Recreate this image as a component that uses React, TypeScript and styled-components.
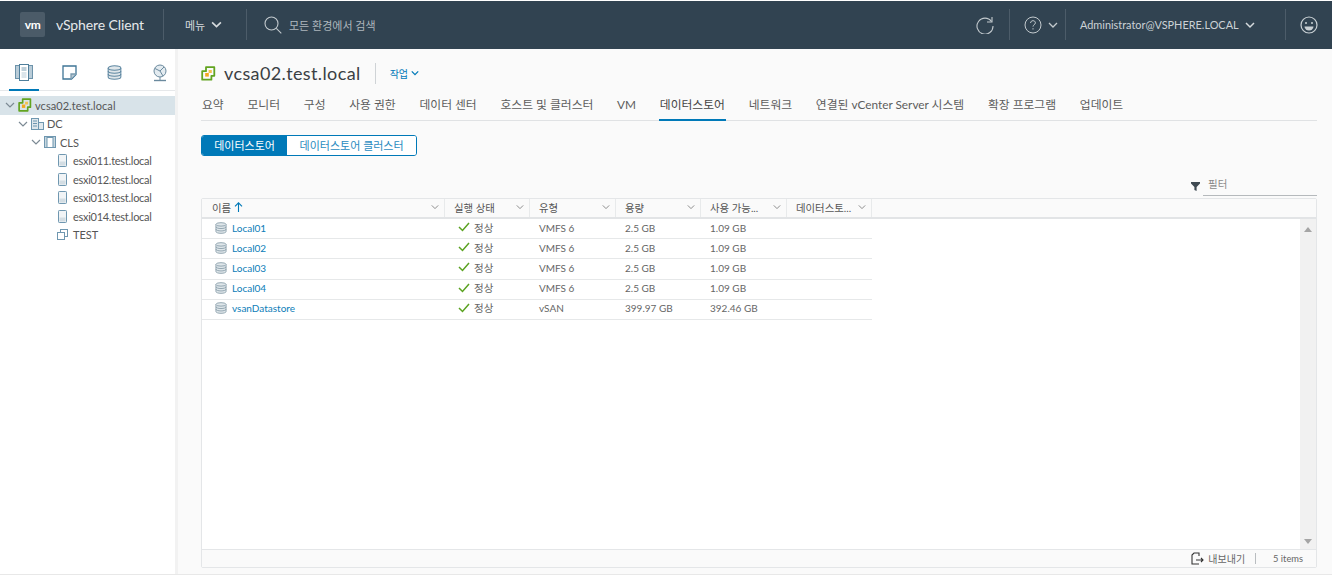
import React from "react";
import styled, { createGlobalStyle } from "styled-components";

const FONT = `Lato, "Noto Sans CJK KR", sans-serif`;

const Global = createGlobalStyle`
  html, body { margin: 0; padding: 0; height: 100%; background: #fff; overflow: hidden; }
  #root { height: 577px; }
  * { box-sizing: border-box; }
`;

const Page = styled.div`
  width: 1333px; height: 577px; display: flex; flex-direction: column;
  font-family: ${FONT}; color: #565656; padding-top: 1px; background: #fff; overflow: hidden;
`;
const Header = styled.header`
  height: 48px; width: 1332px; flex: none; background: #314351; display: flex; align-items: center; color: #dfe3e6;
  padding-right: 14px; padding-bottom: 1px;
`;
const Logo = styled.div`
  width: 25px; height: 25px; margin-left: 20px; background: #4b5b68; border-radius: 2px;
  display: flex; align-items: center; justify-content: center;
  color: #fff; font: 700 12px ${FONT}; letter-spacing: -0.5px;
`;
const Brand = styled.div`
  margin-left: 11px; width: 107px; font-size: 14px; letter-spacing: -0.12px; color: #e6e9eb; padding-bottom: 1px;
`;
const VSep = styled.div<{ $ml?: number; $mr?: number }>`
  width: 1px; height: 31px; background: #4c5c69; flex: none;
  margin-left: ${(p) => p.$ml ?? 0}px; margin-right: ${(p) => p.$mr ?? 0}px;
`;
const MenuBtn = styled.div`
  display: flex; align-items: center; gap: 6px; width: 61px; font-size: 11px; color: #d5dadd;
`;
const Search = styled.div`
  display: flex; align-items: center; gap: 7px; margin-left: 17px; font-size: 11px; color: #aeb7bd; flex: 1;
`;
const Refresh = styled.svg`
  margin-right: 15px; flex: none;
`;
const HelpCaret = styled.span`
  width: 17px; padding-left: 6px; display: flex; flex: none;
`;
const UserName = styled.div`
  display: flex; align-items: center; gap: 6px; width: 219px; flex: none; padding-left: 14px; font-size: 10.9px; color: #ccd2d6;
`;
const Body = styled.div`
  height: 526px; flex: none; display: flex; width: 1332px; border-bottom: 1px solid #e8e8e8;
`;
const Side = styled.aside`
  width: 178px; flex: none; background: #fff; display: flex; flex-direction: column;
  border-right: 3px solid #f2f2f2; overflow: hidden;
`;
const SideTabs = styled.div`
  height: 42px; flex: none; border-bottom: 1px solid #e6e8ea;
  display: flex; padding: 0 0 0 9px;
`;
const SideTab = styled.div<{ $on?: boolean }>`
  width: 30px; flex: none; margin-right: 15.2px; height: 42px; display: flex; align-items: center; justify-content: center;
  padding-top: 7px; border-bottom: 2px solid ${(p) => (p.$on ? "#0079b8" : "transparent")};
  margin-bottom: -1px;
`;
const Tree = styled.div`
  padding-top: 5px; display: flex; flex-direction: column;
`;
const TreeRow = styled.div<{ $indent: number; $on?: boolean }>`
  height: 18.5px; display: flex; align-items: center; font-size: 11px; color: #565656; white-space: nowrap;
  padding-left: ${(p) => p.$indent}px;
  background: ${(p) => (p.$on ? "#d8e3e9" : "transparent")};
`;
const Chevron = styled.span`
  width: 13px; display: inline-flex; align-items: center; flex: none;
`;
const TreeLabel = styled.span<{ $gap?: number; $track?: number }>`
  margin-left: ${(p) => p.$gap ?? 4}px;
  letter-spacing: ${(p) => p.$track ?? 0}px;
`;
const Main = styled.main`
  flex: 1; background: #fafafa; padding: 0 15px 6px 23px; display: flex; flex-direction: column; min-width: 0;
`;
const TitleRow = styled.div`
  height: 48px; display: flex; align-items: center;
`;
const Title = styled.h1`
  margin: 0 0 0 8px; font-weight: 400; font-size: 18px; color: #3a3f44; letter-spacing: 0.38px;
`;
const Action = styled.div`
  margin-left: 14px; display: flex; align-items: center; gap: 3px; font-size: 10px; color: #0079b8;
`;
const TitleSep = styled.div`
  width: 1px; height: 21px; background: #cfd3d6; margin-left: 14px;
`;
const Tabs = styled.nav`
  height: 24px; display: flex; gap: 21.75px; border-bottom: 1px solid #e0e2e4; flex: none;
`;
const Tab = styled.div<{ $on?: boolean }>`
  height: 24px; padding: 0 1px; font-size: 11.8px; line-height: 16px; color: ${(p) => (p.$on ? "#444" : "#5c5c5c")}; white-space: nowrap;
  border-bottom: 2px solid ${(p) => (p.$on ? "#0079b8" : "transparent")};
`;
const Segments = styled.div`
  margin-top: 14px; display: flex; width: 216px; height: 21px; border: 1px solid #0079b8; border-radius: 3px; overflow: hidden; flex: none;
`;
const Segment = styled.div<{ $on?: boolean }>`
  display: flex; align-items: center; justify-content: center; font-size: 11px; padding-bottom: 1px;
  background: ${(p) => (p.$on ? "#0079b8" : "#fff")}; color: ${(p) => (p.$on ? "#fff" : "#2a8bc0")};
  width: ${(p) => (p.$on ? 86 : 130)}px;
`;
const FilterRow = styled.div`
  height: 21px; margin-top: 19px; display: flex; justify-content: flex-end; align-items: stretch; flex: none;
`;
const FilterIcon = styled.div`
  display: flex; align-items: center; margin-right: 3px; padding-top: 2px;
`;
const FilterBox = styled.div`
  width: 114px; border-bottom: 1px solid #b5b9bc; font-size: 10.5px; color: #8a8a8a; padding: 1px 0 0 5px;
`;
const Table = styled.section`
  margin-top: 2px; flex: 1; min-height: 0; display: flex; flex-direction: column; background: #fff;
  border: 1px solid #e4e6e8; border-radius: 2px;
`;
const COLS = "243px 85px 86px 85px 86px 85px";
const Head = styled.div`
  display: grid; grid-template-columns: ${COLS} 1fr; height: 20px; flex: none; background: #fafafa;
  border-bottom: 2px solid #e2e4e6;
`;
const HeadCell = styled.div`
  display: flex; align-items: center; justify-content: space-between; padding: 0 5px 2px 9px;
  font-size: 10.4px; color: #555; border-right: 1px solid #e8eaeb; white-space: nowrap; overflow: hidden;
  &:first-child { padding-left: 10px; }
  &:last-child { border-right: 0; }
`;
const HeadLabel = styled.span`
  display: flex; align-items: center; gap: 3px;
`;
const TableMid = styled.div`
  flex: 1; min-height: 0; display: flex;
`;
const Rows = styled.div`
  flex: 1; display: flex; flex-direction: column;
`;
const Row = styled.div`
  display: grid; grid-template-columns: ${COLS}; width: 670px; height: 20.2px; border-bottom: 1px solid #e6e8e9; flex: none;
`;
const Cell = styled.div`
  display: flex; align-items: center; padding: 0 0 2px 9px; font-size: 10px; color: #666; white-space: nowrap;
`;
const NameCell = styled(Cell)`
  padding-left: 13px; gap: 5px;
`;
const StatusCell = styled(Cell)`
  padding-left: 13px; gap: 4px; font-size: 10.5px; padding-bottom: 3px;
`;
const Link = styled.span`
  color: #0b7db8;
`;
const Scroll = styled.div`
  width: 16px; background: #f1f1f1; display: flex; flex-direction: column; justify-content: space-between; align-items: center;
  padding: 8px 0 5px; flex: none;
`;
const Foot = styled.div`
  height: 18px; flex: none; background: #fafafa; border-top: 1px solid #e4e6e8; display: flex; justify-content: flex-end;
  align-items: center; font-size: 10px; color: #666; padding-right: 13px;
`;
const FootExport = styled.div`
  display: flex; align-items: center; gap: 4px;
`;
const FootSep = styled.div`
  width: 1px; height: 11px; background: #b9bdc0; margin: 0 17px 0 10px;
`;
const Count = styled.span`
  font-size: 9.3px;
`;

const ChevronIcon = ({ size = 10, color = "#7c8a94", w = 1.2 }: { size?: number; color?: string; w?: number }) => (
  <svg width={size} height={size} viewBox="0 0 10 10" fill="none" stroke={color} strokeWidth={w}>
    <path d="M1 3l4 4 4-4" />
  </svg>
);

const VCenterIcon = ({ size = 15 }: { size?: number }) => (
  <svg width={size} height={size} viewBox="0 0 15 15" fill="none">
    <path d="M5 1.2h8.3v8.6H10.4v3.9H1.2V5.2H5z" stroke="#62a420" strokeWidth="1.8" strokeLinejoin="round" />
    <rect x="4.2" y="7" width="3.6" height="3.6" fill="#f2a91e" />
    <rect x="7.6" y="4" width="3.2" height="3" fill="#f2c14e" />
  </svg>
);

const DbIcon = ({ size = 13, color = "#7c909e" }: { size?: number; color?: string }) => (
  <svg width={size} height={size} viewBox="0 0 13 13" fill="#dfe6ea" stroke={color} strokeWidth="0.9">
    <path d="M1 2.6v7.8c0 1 2.5 1.9 5.5 1.9s5.5-.9 5.5-1.9V2.6" />
    <ellipse cx="6.5" cy="2.6" rx="5.5" ry="1.9" />
    <path d="M1 5.2c0 1 2.5 1.9 5.5 1.9S12 6.2 12 5.2M1 7.8c0 1 2.5 1.9 5.5 1.9s5.5-.9 5.5-1.9" fill="none" />
  </svg>
);

const HostIcon = () => (
  <svg width="9" height="13" viewBox="0 0 9 13">
    <rect x="0.5" y="0.5" width="8" height="12" rx="0.8" fill="#f1f4f6" stroke="#6f97b0" />
    <rect x="1.5" y="7.5" width="6" height="4" fill="#d3dde3" />
  </svg>
);

const hosts = ["esxi011.test.local", "esxi012.test.local", "esxi013.test.local", "esxi014.test.local"];
const data = [
  ["Local01", "VMFS 6", "2.5 GB", "1.09 GB"],
  ["Local02", "VMFS 6", "2.5 GB", "1.09 GB"],
  ["Local03", "VMFS 6", "2.5 GB", "1.09 GB"],
  ["Local04", "VMFS 6", "2.5 GB", "1.09 GB"],
  ["vsanDatastore", "vSAN", "399.97 GB", "392.46 GB"],
];
const tabs = ["요약", "모니터", "구성", "사용 권한", "데이터 센터", "호스트 및 클러스터", "VM", "데이터스토어", "네트워크", "연결된 vCenter Server 시스템", "확장 프로그램", "업데이트"];
const heads = ["이름", "실행 상태", "유형", "용량", "사용 가능...", "데이터스토..."];

export default function App() {
  return (
    <Page>
      <Global />
      <Header>
        <Logo>vm</Logo>
        <Brand>vSphere Client</Brand>
        <VSep $mr={21} />
        <MenuBtn>
          메뉴
          <ChevronIcon size={11} color="#d5dadd" w={1.5} />
        </MenuBtn>
        <VSep />
        <Search>
          <svg width="18" height="18" viewBox="0 0 18 18" fill="none" stroke="#c3cace" strokeWidth="1.1">
            <circle cx="7.5" cy="7.5" r="6.5" />
            <path d="M12.3 12.3l5 5" />
          </svg>
          모든 환경에서 검색
        </Search>
        <Refresh width="18" height="18" viewBox="0 0 18 18" fill="none" stroke="#c3cace" strokeWidth="1.1">
          <path d="M15.5 5.5A8 8 0 1 0 17 10" />
          <path d="M16 1v5h-5" />
        </Refresh>
        <VSep $mr={14} />
        <svg width="18" height="18" viewBox="0 0 18 18" fill="none" stroke="#c3cace" strokeWidth="1">
          <circle cx="9" cy="9" r="8" />
          <path d="M6.6 7c0-1.5 1.1-2.3 2.4-2.3s2.4.8 2.4 2.1c0 1.9-2.4 1.9-2.4 3.8" />
          <path d="M9 12.2v1.3" />
        </svg>
        <HelpCaret>
          <ChevronIcon size={10} color="#c3cace" w={1.3} />
        </HelpCaret>
        <VSep $ml={6} />
        <UserName>
          Administrator@VSPHERE.LOCAL
          <ChevronIcon size={10} color="#d5dadd" w={1.5} />
        </UserName>
        <VSep $mr={14} />
        <svg width="18" height="18" viewBox="0 0 18 18" fill="none" stroke="#c9d0d4" strokeWidth="1.2">
          <circle cx="9" cy="9" r="8" />
          <circle cx="6" cy="7" r="1" fill="#c9d0d4" stroke="none" />
          <circle cx="12" cy="7" r="1" fill="#c9d0d4" stroke="none" />
          <path d="M4.5 10.5h9a4.5 4 0 0 1-9 0z" fill="#c9d0d4" stroke="none" />
        </svg>
      </Header>
      <Body>
        <Side>
          <SideTabs>
            <SideTab $on>
              <svg width="18" height="17" viewBox="0 0 18 17" stroke="#6d93aa" strokeWidth="1">
                <rect x="0.5" y="1.5" width="17" height="13" fill="#b9ccd8" />
                <rect x="4.5" y="0.5" width="9" height="16" fill="#fff" stroke="#4f7f9c" />
                <path d="M6.5 4h5M6.5 6h5" stroke="#7d9fb3" fill="none" />
                <rect x="6.5" y="8" width="5" height="6" fill="#dbe5eb" stroke="none" />
              </svg>
            </SideTab>
            <SideTab>
              <svg width="15" height="15" viewBox="0 0 15 15" fill="none" stroke="#3f7596" strokeWidth="1.3">
                <path d="M1 1h13v8.5L9.5 14H1z" fill="#fff" />
                <path d="M9 14V9h5" fill="#b8c9d4" stroke="#7a9aae" />
              </svg>
            </SideTab>
            <SideTab>
              <DbIcon size={15} color="#5f88a2" />
            </SideTab>
            <SideTab>
              <svg width="16" height="18" viewBox="0 0 16 18" fill="none" stroke="#6b8a9e" strokeWidth="1">
                <circle cx="8" cy="7" r="6" fill="#e3ebf0" />
                <path d="M3 4.5l5 2.5 4-4M8 7l3 5" />
                <path d="M8 13v3" />
                <path d="M2 16.5h12" strokeWidth="1.4" />
              </svg>
            </SideTab>
          </SideTabs>
          <Tree>
            <TreeRow $indent={5} $on>
              <Chevron><ChevronIcon size={10} /></Chevron>
              <VCenterIcon size={14} />
              <TreeLabel $gap={3} $track={0.06}>vcsa02.test.local</TreeLabel>
            </TreeRow>
            <TreeRow $indent={18}>
              <Chevron><ChevronIcon size={10} /></Chevron>
              <svg width="13" height="12" viewBox="0 0 13 12" fill="#dfe7ec" stroke="#6f97b0">
                <rect x="0.5" y="0.5" width="7" height="11" />
                <rect x="7.5" y="4.5" width="5" height="7" />
                <path d="M2 3h4M2 5.5h4M2 8h4" fill="none" />
              </svg>
              <TreeLabel $gap={3}>DC</TreeLabel>
            </TreeRow>
            <TreeRow $indent={31}>
              <Chevron><ChevronIcon size={10} /></Chevron>
              <svg width="12" height="12" viewBox="0 0 12 12" fill="#c7d6df" stroke="#6f97b0">
                <rect x="0.5" y="0.5" width="11" height="11" />
                <rect x="3" y="1.5" width="6" height="10" fill="#fff" />
              </svg>
              <TreeLabel>CLS</TreeLabel>
            </TreeRow>
            {hosts.map((h) => (
              <TreeRow key={h} $indent={58}>
                <HostIcon />
                <TreeLabel $gap={6} $track={-0.28}>{h}</TreeLabel>
              </TreeRow>
            ))}
            <TreeRow $indent={57}>
              <svg width="11" height="11" viewBox="0 0 11 11" fill="#fff" stroke="#6f97b0">
                <rect x="3.5" y="0.5" width="7" height="7" />
                <rect x="0.5" y="3.5" width="7" height="7" />
              </svg>
              <TreeLabel $gap={5}>TEST</TreeLabel>
            </TreeRow>
          </Tree>
        </Side>
        <Main>
          <TitleRow>
            <VCenterIcon size={15} />
            <Title>vcsa02.test.local</Title>
            <TitleSep />
            <Action>
              작업
              <ChevronIcon size={8} color="#0079b8" w={1.6} />
            </Action>
          </TitleRow>
          <Tabs>
            {tabs.map((t) => (
              <Tab key={t} $on={t === "데이터스토어"}>{t}</Tab>
            ))}
          </Tabs>
          <Segments>
            <Segment $on>데이터스토어</Segment>
            <Segment>데이터스토어 클러스터</Segment>
          </Segments>
          <FilterRow>
            <FilterIcon>
              <svg width="9" height="9" viewBox="0 0 9 9" fill="#3f4a52"><path d="M0 0h9v1.5L5.6 5v4L3.4 8V5L0 1.5z" /></svg>
            </FilterIcon>
            <FilterBox>필터</FilterBox>
          </FilterRow>
          <Table>
            <Head>
              {heads.map((h, i) => (
                <HeadCell key={h}>
                  <HeadLabel>
                    {h}
                    {i === 0 && (
                      <svg width="9" height="10" viewBox="0 0 9 10" fill="none" stroke="#0079b8" strokeWidth="1.1">
                        <path d="M4.5 10V1M1 4.3l3.5-3.5L8 4.3" />
                      </svg>
                    )}
                  </HeadLabel>
                  <ChevronIcon size={8} color="#7d7d7d" w={1.1} />
                </HeadCell>
              ))}
              <HeadCell />
            </Head>
            <TableMid>
              <Rows>
                {data.map((r) => (
                  <Row key={r[0]}>
                    <NameCell>
                      <DbIcon size={12} color="#8499a6" />
                      <Link>{r[0]}</Link>
                    </NameCell>
                    <StatusCell>
                      <svg width="12" height="10" viewBox="0 0 12 10" fill="none" stroke="#5aa220" strokeWidth="1.5">
                        <path d="M1 5l3.5 3.5L11 1" />
                      </svg>
                      정상
                    </StatusCell>
                    <Cell>{r[1]}</Cell>
                    <Cell>{r[2]}</Cell>
                    <Cell>{r[3]}</Cell>
                    <Cell />
                  </Row>
                ))}
              </Rows>
              <Scroll>
                <svg width="8" height="5" viewBox="0 0 8 5" fill="#a5a5a5"><path d="M4 0l4 5H0z" /></svg>
                <svg width="8" height="5" viewBox="0 0 8 5" fill="#a5a5a5"><path d="M4 5L0 0h8z" /></svg>
              </Scroll>
            </TableMid>
            <Foot>
              <FootExport>
                <svg width="13" height="13" viewBox="0 0 13 13" fill="none" stroke="#333" strokeWidth="1.1">
                  <path d="M8 12H1V3l2-2h5v3M5 8h7M10 6l2 2-2 2" />
                </svg>
                내보내기
              </FootExport>
              <FootSep />
              <Count>5 items</Count>
            </Foot>
          </Table>
        </Main>
      </Body>
    </Page>
  );
}
